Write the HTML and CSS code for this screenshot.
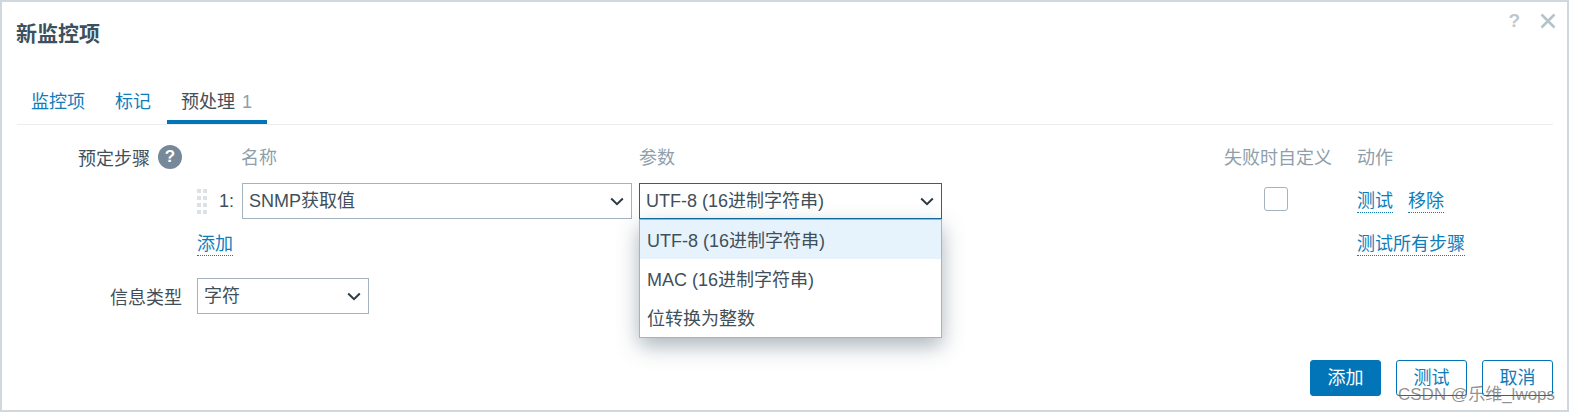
FILE: index.html
```html
<!DOCTYPE html>
<html lang="zh-CN">
<head>
<meta charset="utf-8">
<title>新监控项</title>
<link rel="stylesheet" href="styles.css">
</head>
<body>
<div class="dialog">
  <header class="head">
    <h1 class="title">新监控项</h1>
    <div class="head-tools">
      <span class="tool-help">?</span>
      <svg class="tool-close" width="16" height="16" viewBox="0 0 16 16"><path d="M1.5 1.5L14.5 14.5M14.5 1.5L1.5 14.5"/></svg>
    </div>
  </header>
  <nav class="tabs">
    <a class="tab">监控项</a>
    <a class="tab">标记</a>
    <a class="tab active">预处理<span class="count">1</span></a>
  </nav>
  <main class="form">
    <div class="form-row steps-row">
      <div class="label label-steps">预定步骤
        <span class="help">?</span>
      </div>
      <div class="steps">
        <span class="th th-name">名称</span>
        <span class="th th-param">参数</span>
        <span class="th th-custom">失败时自定义</span>
        <span class="th th-action">动作</span>

        <div class="handle">
          <i></i><i></i><i></i><i></i><i></i><i></i><i></i><i></i>
        </div>
        <span class="num">1:</span>
        <div class="select sel-name">SNMP获取值
          <svg class="chev" width="14" height="9" viewBox="0 0 14 9"><path d="M1.2 1.5L7 7.2L12.8 1.5"/></svg>
        </div>
        <div class="param-cell">
          <div class="select sel-param">UTF-8 (16进制字符串)
            <svg class="chev" width="14" height="9" viewBox="0 0 14 9"><path d="M1.2 1.5L7 7.2L12.8 1.5"/></svg>
          </div>
          <ul class="menu">
            <li class="opt current">UTF-8 (16进制字符串)</li>
            <li class="opt">MAC (16进制字符串)</li>
            <li class="opt">位转换为整数</li>
          </ul>
        </div>
        <div class="check-cell"><span class="check"></span></div>
        <div class="actions"><a class="link">测试</a><a class="link">移除</a></div>

        <div class="add-cell"><a class="link">添加</a></div>
        <div class="all-cell"><a class="link">测试所有步骤</a></div>
      </div>
    </div>
    <div class="form-row type-row">
      <div class="label">信息类型</div>
      <div class="select sel-type">字符
        <svg class="chev" width="14" height="9" viewBox="0 0 14 9"><path d="M1.2 1.5L7 7.2L12.8 1.5"/></svg>
      </div>
    </div>
  </main>
  <footer class="foot">
    <button class="btn primary">添加</button>
    <button class="btn">测试</button>
    <button class="btn">取消</button>
  </footer>
  <div class="watermark">CSDN @乐维_lwops</div>
</div>
</body>
</html>
```
FILE: styles.css
```css
* { box-sizing: border-box; }
html, body { margin: 0; height: 412px; overflow: hidden; background: #fff; }
body {
  font-family: "Liberation Sans", "Noto Sans CJK SC", sans-serif;
  font-size: 18px;
  color: #3f505b;
}
.dialog {
  position: relative;
  width: 1569px;
  height: 412px;
  border: 2px solid #d0d8de;
  display: flex;
  flex-direction: column;
}
.head {
  height: 66px;
  display: flex;
  justify-content: space-between;
  padding: 18px 11px 0 14px;
}
.title {
  margin: 0;
  font-size: 21px;
  line-height: 28px;
  font-weight: 700;
  color: #3d505d;
}
.head-tools { display: flex; gap: 20px; height: 24px; align-items: center; margin-top: -11px; }
.tool-help { font-size: 19px; font-weight: 700; color: #bcc8cf; }
.tool-close path { stroke: #b5c3cb; stroke-width: 2.6; fill: none; }
.tabs {
  display: flex;
  margin: 0 14px 0 15px;
  height: 57px;
  border-bottom: 1px solid #ebeef0;
}
.tab {
  padding: 15px 16px 0 14px;
  font-size: 18px;
  line-height: 38px;
  height: 56px;
  color: #0f7dba;
  white-space: nowrap;
}
.tab.active {
  color: #3f505b;
  border-bottom: 4px solid #0275b8;
  width: 100px;
}
.count { color: #8e9fab; margin-left: 7px; }
.form { display: flex; flex-direction: column; }
.form-row { display: flex; }
.label { width: 180px; text-align: right; white-space: nowrap; }
.label-steps {
  display: flex;
  justify-content: flex-end;
  align-items: center;
  gap: 8px;
  height: 25px;
  margin-top: -1px;
}
.help {
  width: 24px;
  height: 24px;
  border-radius: 50%;
  background: #76899a;
  color: #fff;
  font-size: 17px;
  font-weight: 700;
  line-height: 24px;
  text-align: center;
}
.steps-row { padding-top: 20px; }
.steps {
  margin-left: 15px;
  display: grid;
  grid-template-columns: 45px 397px 585px 133px 1fr;
  grid-template-rows: 38px 36px 39px;
  width: 1340px;
}
.th { color: #8e9fab; line-height: 27px; align-self: start; white-space: nowrap; }
.th-param { grid-column: 3; }
.th-custom { grid-column: 4; }
.th-action { grid-column: 5; }
.th-name { grid-column: 1 / 3; margin-left: 44px; }
.handle {
  grid-column: 1;
  grid-row: 2;
  display: grid;
  grid-template-columns: 4px 4px;
  gap: 3px 2px;
  align-content: center;
  width: 10px;
}
.handle i { width: 4px; height: 4px; background: #dbe1e5; }
.num { grid-column: 1; grid-row: 2; text-align: right; padding-right: 8px; line-height: 36px; }
.select {
  position: relative;
  height: 36px;
  border: 1px solid #a4b3bf;
  background: #fff;
  line-height: 35px;
  padding-left: 6px;
  white-space: nowrap;
}
.chev { position: absolute; right: 7px; top: 13px; }
.chev path { fill: none; stroke: #2b3a44; stroke-width: 2; }
.sel-name { grid-column: 2; grid-row: 2; width: 390px; }
.param-cell { grid-column: 3; grid-row: 2; position: relative; width: 303px; }
.sel-param { border-color: #0d6ca6; }
.menu {
  position: absolute;
  top: 36px;
  left: 0;
  width: 303px;
  height: 119px;
  margin: 0;
  padding: 0;
  list-style: none;
  background: #fff;
  border: 1px solid #a4b3bf;
  box-shadow: 0 8px 20px rgba(70, 90, 105, .45);
  z-index: 2;
}
.opt { height: 39px; line-height: 43px; padding-left: 7px; white-space: nowrap; }
.opt.current { background: #e6f3fc; }
.check-cell { grid-column: 4; grid-row: 2; padding: 4px 0 0 40px; }
.check {
  display: block;
  width: 24px;
  height: 24px;
  border: 1px solid #a4b3bf;
  border-radius: 3px;
}
.actions { grid-column: 5; grid-row: 2; display: flex; gap: 15px; align-items: center; }
.link {
  color: #0f7dba;
  border-bottom: 1px dotted #0f7dba;
  line-height: 22px;
  white-space: nowrap;
}
.add-cell { grid-column: 1 / 3; grid-row: 3; padding-top: 14px; }
.all-cell { grid-column: 5; grid-row: 3; padding-top: 14px; }
.add-cell .link, .all-cell .link { display: inline-block; }
.type-row { padding-top: 20px; align-items: center; }
.sel-type { margin-left: 15px; width: 172px; }
.foot {
  margin-top: auto;
  display: flex;
  justify-content: flex-end;
  gap: 15px;
  padding: 0 14px 14px 0;
}
.btn {
  width: 71px;
  height: 36px;
  padding: 0 0 5px;
  border: 1px solid #0275b8;
  border-radius: 3px;
  background: #fff;
  color: #0f7dba;
  font: inherit;
}
.btn.primary { background: #0275b8; color: #fff; }
.watermark {
  position: absolute;
  left: 1396px;
  bottom: 5px;
  font-size: 17px;
  line-height: 20px;
  color: rgba(95, 95, 95, .7);
  white-space: nowrap;
}
```
